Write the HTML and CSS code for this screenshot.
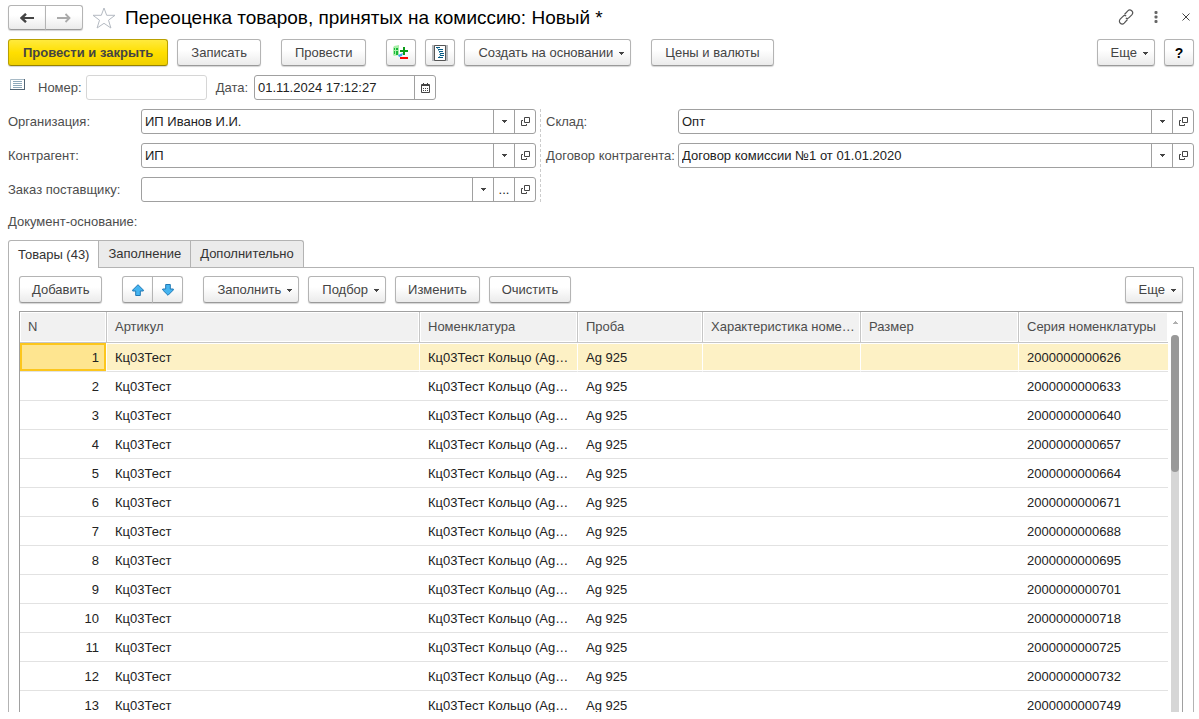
FILE: index.html
```html
<!DOCTYPE html>
<html lang="ru">
<head>
<meta charset="utf-8">
<title>Переоценка товаров, принятых на комиссию: Новый *</title>
<link rel="stylesheet" href="styles.css">
</head>
<body>
<svg class="defs" aria-hidden="true">
  <symbol id="open" viewBox="0 0 9 9"><path d="M3.500.5h5v5h-5zM2 3.500H.5v5h5V7" fill="none" stroke="#444"/></symbol>
  <symbol id="caret" viewBox="0 0 5 3"><path d="M0 0h5v1H4v1H3v1H2V2H1V1H0z" fill="#444"/></symbol>
</svg>
<main class="window">
  <header class="titlebar">
    <div class="pair">
      <button class="btn nav" aria-label="Назад"><svg width="14" height="10" viewBox="0 0 14 10"><path d="M14 5H3" stroke="#444" stroke-width="2"/><path d="M6 .8L1.500 5 6 9.200" fill="none" stroke="#444" stroke-width="2.400"/></svg></button>
      <button class="btn nav" aria-label="Вперед"><svg width="14" height="10" viewBox="0 0 14 10"><path d="M0 5h12M8.500 1l4 4-4 4" fill="none" stroke="#aaa" stroke-width="1.800"/></svg></button>
    </div>
    <button class="plain star" aria-label="В избранное"><svg width="24" height="22" viewBox="0 0 24 22"><path d="M12 1l2.700 7.300H23l-6.500 4.900 2.400 7.800L12 16.300 5.100 21l2.400-7.800L1 8.300h8.300z" fill="none" stroke="#b4bac2"/></svg></button>
    <h1>Переоценка товаров, принятых на комиссию: Новый *</h1>
    <div class="window-tools">
      <button class="plain" aria-label="Ссылка"><svg width="16" height="16" viewBox="0 0 16 16" fill="none" stroke="#555" stroke-width="1.200"><path d="M6.500 5.500l3.300-3.600c1-1 2.700-1.200 3.900-.1 1.200 1.100 1.200 2.800.1 4L11 8.700c-1 1-2.300 1-3.200.4M9.500 10.500l-3.300 3.600c-1 1-2.700 1.200-3.900.1-1.200-1.100-1.200-2.800-.1-4L5 7.300c1-1 2.300-1 3.200-.4"/></svg></button>
      <button class="plain" aria-label="Меню"><svg width="4" height="12" viewBox="0 0 4 12" fill="#666"><rect x=".5" width="3" height="3" rx="1"/><rect x=".5" y="4.500" width="3" height="3" rx="1"/><rect x=".5" y="9" width="3" height="3" rx="1"/></svg></button>
      <button class="plain close" aria-label="Закрыть"><svg width="8" height="8" viewBox="0 0 8 8"><path d="M.5.5l7 7M7.500.5l-7 7" stroke="#444"/></svg></button>
    </div>
  </header>

  <div class="toolbar commands">
    <button class="btn primary">Провести и закрыть</button>
    <button class="btn">Записать</button>
    <button class="btn group">Провести</button>
    <button class="btn icon group" aria-label="Движения документа"><svg width="16" height="16" viewBox="0 0 16 16"><path d="M0 3l1-2 5-1v10l-5 1-1-1z" fill="#a9efa9"/><path d="M1 3h1v2H1zM1 6h1v3H1zM3 3h2v2H3zM3 6h2v4H3z" fill="#18b73a"/><path d="M5 10l5-2-1 3-3 1z" fill="#3fa3e8"/><path d="M10 2h2v3h3v2h-3v3h-2V7H7V5h3z" fill="#0a9b18"/><path d="M7 12h8v2H7z" fill="#f00"/></svg></button>
    <button class="btn icon" aria-label="Отчет"><svg width="16" height="16" viewBox="0 0 16 16"><path d="M0 0h16v16H0z" fill="#b7babd"/><path d="M2.500.5h11v15h-11z" fill="#fff" stroke="#555"/><path d="M4 2.500h4M6 4.500h5M7 6.500h4M8 8.500h4M8 10.500h4M6 12.500h5" stroke="#075b85"/><path d="M5 3.500h1M6 5.500h1M7 7.500h1M7 9.500h2M7 11.500h1" stroke="#6aa5c0"/></svg></button>
    <button class="btn drop">Создать на основании <svg class="caret"><use href="#caret"/></svg></button>
    <button class="btn group">Цены и валюты</button>
    <button class="btn drop push">Еще <svg class="caret"><use href="#caret"/></svg></button>
    <button class="btn icon help">?</button>
  </div>

  <div class="doc-line">
    <svg class="doc-icon" width="16" height="12" viewBox="0 0 16 12"><path d="M.5.5h14v10H.5z" fill="#fff" stroke="#a8bac6"/><path d="M14.500 0v11M0 10.500h15" fill="none" stroke="#526575"/><path d="M3 2.500h9M3 4.500h9M3 6.500h9M3 8.500h9" stroke="#8ea9bb"/></svg>
    <label for="num">Номер:</label>
    <span class="field pale num"><input id="num"></span>
    <label for="date">Дата:</label>
    <span class="field date"><input id="date" value="01.11.2024 17:12:27"><button aria-label="Календарь"><svg width="9" height="10" viewBox="0 0 9 10"><path d="M.5 1.500h8v8h-8zM0 2.500h9M2.500 0v2M6.500 0v2" fill="none" stroke="#444"/><path d="M2 5h1v1H2zM4 5h1v1H4zM6 5h1v1H6zM2 7h1v1H2zM4 7h1v1H4zM6 7h1v1H6z" fill="#444"/></svg></button></span>
  </div>

  <div class="form">
    <div class="form-col left">
      <label for="org">Организация:</label>
      <span class="field"><input id="org" value="ИП Иванов И.И."><button aria-label="Выбрать"><svg class="caret"><use href="#caret"/></svg></button><button aria-label="Открыть"><svg class="open"><use href="#open"/></svg></button></span>
      <label for="agent">Контрагент:</label>
      <span class="field"><input id="agent" value="ИП"><button aria-label="Выбрать"><svg class="caret"><use href="#caret"/></svg></button><button aria-label="Открыть"><svg class="open"><use href="#open"/></svg></button></span>
      <label for="order">Заказ поставщику:</label>
      <span class="field"><input id="order"><button aria-label="Выбрать"><svg class="caret"><use href="#caret"/></svg></button><button>...</button><button aria-label="Открыть"><svg class="open"><use href="#open"/></svg></button></span>
    </div>
    <div class="form-col right">
      <label for="store">Склад:</label>
      <span class="field"><input id="store" value="Опт"><button aria-label="Выбрать"><svg class="caret"><use href="#caret"/></svg></button><button aria-label="Открыть"><svg class="open"><use href="#open"/></svg></button></span>
      <label for="deal">Договор контрагента:</label>
      <span class="field"><input id="deal" value="Договор комиссии №1 от 01.01.2020"><button aria-label="Выбрать"><svg class="caret"><use href="#caret"/></svg></button><button aria-label="Открыть"><svg class="open"><use href="#open"/></svg></button></span>
    </div>
  </div>
  <p class="basis">Документ-основание:</p>

  <div class="tabs" role="tablist">
    <button role="tab" aria-selected="true" class="tab active">Товары (43)</button>
    <button role="tab" aria-selected="false" class="tab">Заполнение</button>
    <button role="tab" aria-selected="false" class="tab">Дополнительно</button>
  </div>
  <section class="panel">
    <div class="toolbar">
      <button class="btn">Добавить</button>
      <div class="pair group">
        <button class="btn move" aria-label="Вверх"><svg width="12" height="12" viewBox="0 0 12 12"><path d="M6 .7l5.300 5.300v1H8.300v4.500H3.700V7H.7V6z" fill="#45b4f0" stroke="#2079b5"/></svg></button>
        <button class="btn move" aria-label="Вниз"><svg width="12" height="12" viewBox="0 0 12 12"><path d="M6 11.300L.7 6V5h3V.5h4.600V5h3v1z" fill="#45b4f0" stroke="#2079b5"/></svg></button>
      </div>
      <button class="btn drop group">Заполнить <svg class="caret"><use href="#caret"/></svg></button>
      <button class="btn drop">Подбор <svg class="caret"><use href="#caret"/></svg></button>
      <button class="btn">Изменить</button>
      <button class="btn">Очистить</button>
      <button class="btn drop push">Еще <svg class="caret"><use href="#caret"/></svg></button>
    </div>
    <div class="grid">
      <table>
        <colgroup><col class="c-n"><col><col class="c-name"><col class="c-probe"><col class="c-name"><col class="c-name"><col class="c-series"></colgroup>
        <thead><tr><th>N</th><th>Артикул</th><th>Номенклатура</th><th>Проба</th><th>Характеристика номе…</th><th>Размер</th><th>Серия номенклатуры</th></tr></thead>
        <tbody>
          <tr class="current"><td>1</td><td>Кц03Тест</td><td>Кц03Тест Кольцо (Ag…</td><td>Ag 925</td><td></td><td></td><td>2000000000626</td></tr>
          <tr><td>2</td><td>Кц03Тест</td><td>Кц03Тест Кольцо (Ag…</td><td>Ag 925</td><td></td><td></td><td>2000000000633</td></tr>
          <tr><td>3</td><td>Кц03Тест</td><td>Кц03Тест Кольцо (Ag…</td><td>Ag 925</td><td></td><td></td><td>2000000000640</td></tr>
          <tr><td>4</td><td>Кц03Тест</td><td>Кц03Тест Кольцо (Ag…</td><td>Ag 925</td><td></td><td></td><td>2000000000657</td></tr>
          <tr><td>5</td><td>Кц03Тест</td><td>Кц03Тест Кольцо (Ag…</td><td>Ag 925</td><td></td><td></td><td>2000000000664</td></tr>
          <tr><td>6</td><td>Кц03Тест</td><td>Кц03Тест Кольцо (Ag…</td><td>Ag 925</td><td></td><td></td><td>2000000000671</td></tr>
          <tr><td>7</td><td>Кц03Тест</td><td>Кц03Тест Кольцо (Ag…</td><td>Ag 925</td><td></td><td></td><td>2000000000688</td></tr>
          <tr><td>8</td><td>Кц03Тест</td><td>Кц03Тест Кольцо (Ag…</td><td>Ag 925</td><td></td><td></td><td>2000000000695</td></tr>
          <tr><td>9</td><td>Кц03Тест</td><td>Кц03Тест Кольцо (Ag…</td><td>Ag 925</td><td></td><td></td><td>2000000000701</td></tr>
          <tr><td>10</td><td>Кц03Тест</td><td>Кц03Тест Кольцо (Ag…</td><td>Ag 925</td><td></td><td></td><td>2000000000718</td></tr>
          <tr><td>11</td><td>Кц03Тест</td><td>Кц03Тест Кольцо (Ag…</td><td>Ag 925</td><td></td><td></td><td>2000000000725</td></tr>
          <tr><td>12</td><td>Кц03Тест</td><td>Кц03Тест Кольцо (Ag…</td><td>Ag 925</td><td></td><td></td><td>2000000000732</td></tr>
          <tr><td>13</td><td>Кц03Тест</td><td>Кц03Тест Кольцо (Ag…</td><td>Ag 925</td><td></td><td></td><td>2000000000749</td></tr>
        </tbody>
      </table>
      <div class="scroll">
        <svg width="5" height="3" viewBox="0 0 5 3"><path d="M2 0h1v1h1v1h1v1H0V2h1V1h1z" fill="#b0b0b0"/></svg>
        <div class="track"><div class="thumb"></div></div>
      </div>
    </div>
  </section>
</main>
</body>
</html>
```
FILE: styles.css
```css
* { box-sizing: border-box; }
body {
  margin: 0;
  background: #fff;
  color: #4d4d4d;
  font: 13px/16px "Liberation Sans", Arial, sans-serif;
}
button, input { font: inherit; color: inherit; }
button { cursor: pointer; }
svg { display: block; flex: none; }
.defs { position: absolute; width: 0; height: 0; }
.caret { width: 5px; height: 3px; }
.open { width: 9px; height: 9px; }

.window {
  display: flex;
  flex-direction: column;
  height: 100vh;
  padding: 5px 5px 7px 8px;
}

/* title */
.titlebar { display: flex; align-items: center; height: 25px; }
.plain { display: flex; padding: 0; border: 0; background: none; }
.star { margin: 0 9px; }
h1 { margin: 0; color: #000; font-size: 19px; line-height: 24px; font-weight: 400; }
.window-tools { display: flex; align-items: center; gap: 20px; margin: 0 4px 2px auto; }
.close { margin-left: 4px; }

/* buttons */
.btn {
  display: flex;
  align-items: center;
  justify-content: center;
  height: 27px;
  padding: 0 12px;
  border: 1px solid #b4b4b4;
  border-bottom-color: #9a9a9a;
  border-radius: 3px;
  background: linear-gradient(#fff 40%, #ebebeb);
  box-shadow: 0 1px 1px #d4d4d4;
  color: #444;
  white-space: nowrap;
}
.commands .btn { padding: 0 13px; }
.commands .primary {
  padding: 0 14px;
  border-color: #b9a000;
  border-bottom-color: #968200;
  background: linear-gradient(#ffea3d, #ffdf00 50%, #f0d000);
  font-weight: 700;
}
.toolbar .drop { gap: 6px; padding: 0 6px 0 13px; }
.drop .caret { margin-top: 2px; }
.toolbar .icon { width: 30px; padding: 0; }
.help { color: #000; font-size: 14px; font-weight: 700; }
.pair { display: flex; }
.pair .btn:first-child { border-radius: 3px 0 0 3px; }
.pair .btn:last-child { margin-left: -1px; border-radius: 0 3px 3px 0; }
.nav { width: 38px; height: 25px; padding: 0; }
.move { width: 31px; padding: 0; }
.toolbar { display: flex; gap: 9px; }
.group { margin-left: 11px; }
.push { margin-left: auto; }
.commands { margin-top: 9px; }

/* fields */
.field {
  display: flex;
  height: 25px;
  min-width: 0;
  border: 1px solid #a0a0a0;
  border-radius: 3px;
  background: #fff;
  color: #222;
}
.field input {
  flex: 1;
  min-width: 0;
  padding: 0 3px;
  border: 0;
  outline: 0;
  background: none;
}
.field button {
  display: flex;
  align-items: center;
  justify-content: center;
  width: 21px;
  padding: 0;
  border: 0;
  border-left: 1px solid #a0a0a0;
  background: none;
}
.pale { border-color: #d6d6d6; }
.doc-line { display: flex; align-items: center; margin-top: 9px; }
.doc-icon { margin: 0 12px 6px 2px; }
.num { width: 121px; margin: 0 9px 0 4px; }
.date { width: 182px; margin-left: 6px; }

.form { display: grid; grid-template-columns: 533fr 653fr; margin-top: 9px; }
.form-col {
  display: grid;
  grid-template-columns: 133px 1fr;
  grid-auto-rows: 25px;
  row-gap: 9px;
  align-items: center;
}
.left { padding-right: 4px; border-right: 1px dashed #ccc; }
.right { grid-template-columns: 132px 1fr; padding-left: 5px; }
.form-col label { white-space: nowrap; }
.basis { margin: 12px 0 10px; }

/* tabs */
.tabs { display: flex; }
.tab {
  height: 27px;
  margin-right: -1px;
  padding: 0 9px;
  border: 1px solid #b3b3b3;
  border-bottom: 0;
  background: #ebebeb;
  color: #333;
}
.tab:last-child { border-radius: 0 3px 0 0; }
.active {
  z-index: 1;
  height: 28px;
  margin-bottom: -1px;
  border-radius: 3px 0 0 0;
  background: #fff;
}
.panel {
  display: flex;
  flex: 1;
  flex-direction: column;
  gap: 8px;
  min-height: 0;
  padding: 8px 10px 0;
  border: 1px solid #b3b3b3;
  border-bottom: 0;
}

/* goods table */
.grid {
  display: flex;
  flex: 1;
  min-height: 0;
  overflow: hidden;
  border: 1px solid #a0a0a0;
  border-bottom: 0;
}
table {
  flex: 1;
  width: 100%;
  min-width: 0;
  height: max-content;
  table-layout: fixed;
  border-collapse: separate;
  border-spacing: 0;
  color: #222;
}
.c-n { width: 87px; }
.c-name { width: 158px; }
.c-probe { width: 125px; }
.c-series { width: 149px; }
th, td {
  overflow: hidden;
  padding: 0 4px 0 8px;
  text-align: left;
  text-overflow: ellipsis;
  white-space: nowrap;
}
th {
  height: 31px;
  border-right: 1px solid #c6c6c6;
  border-bottom: 1px solid #c6c6c6;
  background: #f1f1f1;
  box-shadow: inset 0 0 0 1px #fff;
  color: #4d4d4d;
  font-weight: 400;
}
td { height: 29px; padding-top: 2px; border-bottom: 1px solid #e2e2e2; }
td:first-child { padding-right: 8px; text-align: right; }
th:last-child { border-right: 0; }
.current td {
  border-right: 1px solid #fff;
  background: #fdf1c5;
  box-shadow: inset 0 1px #fff, inset 0 -1px #fff;
}
.current td:first-child {
  padding-right: 7px;
  background: #fee590;
  box-shadow: inset 0 0 0 2px #fcc61d;
}
.current td:last-child { border-right: 0; }
.scroll {
  display: flex;
  flex-direction: column;
  align-items: center;
  gap: 11px;
  width: 14px;
  padding-top: 9px;
}
.track { flex: 1; width: 8px; border-radius: 4px 4px 0 0; background: #d6d6d6; }
.thumb { height: 137px; border-radius: 4px; background: #999; }
```
